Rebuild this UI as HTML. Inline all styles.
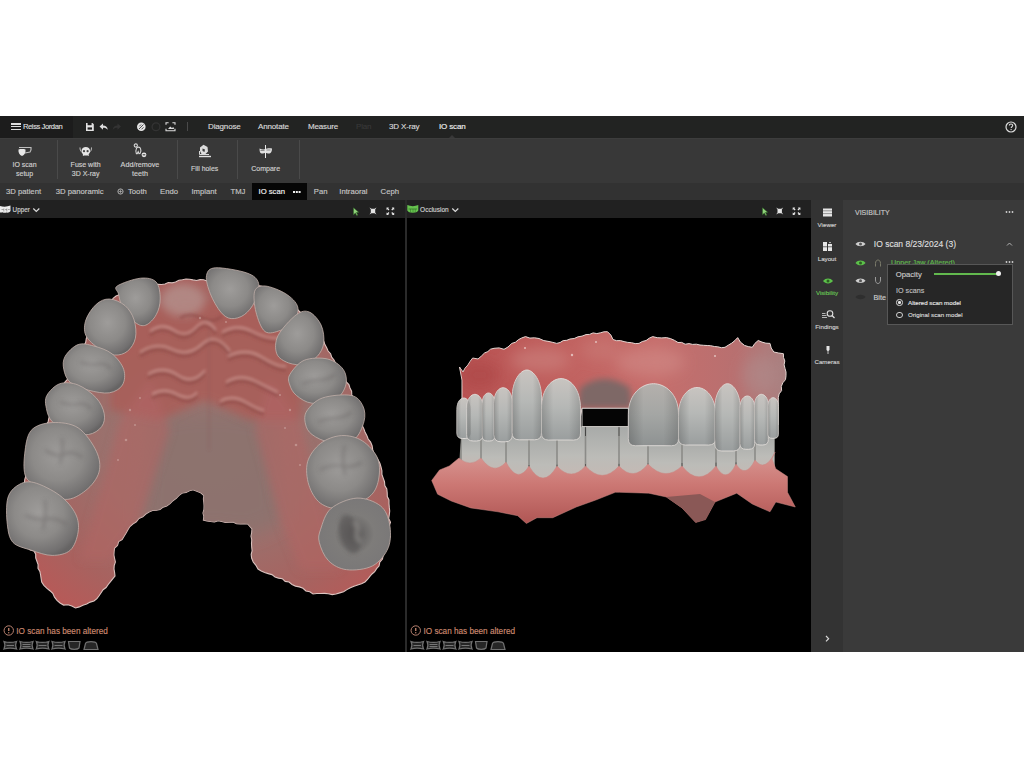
<!DOCTYPE html>
<html><head><meta charset="utf-8">
<style>
*{box-sizing:border-box;margin:0;padding:0}
html,body{width:1024px;height:768px;background:#fff;overflow:hidden}
body{position:relative;font-family:"Liberation Sans",sans-serif;color:#d0d0d0}
.a{position:absolute}
.t{position:absolute;white-space:nowrap;line-height:1;-webkit-text-stroke:0.15px currentColor}
#app{position:absolute;left:0;top:116px;width:1024px;height:536px;background:#000;overflow:hidden}
#topbar{left:0;top:0;width:1024px;height:22px;background:#222322}
#namebox{left:0;top:0;width:73px;height:22px;background:#1c1c1c}
#ribbon{left:0;top:22px;width:1024px;height:44.5px;background:#383838;border-top:1px solid #3d3d3d}
#tabs{left:0;top:66.5px;width:1024px;height:17.5px;background:#323232}
.menu{font-size:8px;letter-spacing:-0.15px;color:#d8d8d8;top:7.1px}
.rb{color:#cfcfcf;text-align:center;line-height:8.7px}
.sep{background:#4a4a4a;width:1px}
.tab{font-size:7.7px;color:#c4c4c4;top:72px}
#vh1{left:0;top:84px;width:405px;height:17.5px;background:#212121}
#vh2{left:407px;top:84px;width:404px;height:17.5px;background:#212121}
#div{left:405px;top:84px;width:2px;height:452px;background:#2a2a2a}
#strip{left:811px;top:84px;width:32px;height:452px;background:#333333}
#panel{left:843px;top:84px;width:181px;height:452px;background:#3a3a3a}
.sl{font-size:6.2px;color:#cfcfcf;text-align:center;width:32px}
.warn{font-size:8.2px;color:#cd8a70}
</style></head><body>
<div id="app">
  <div class="a" id="topbar"></div>
  <div class="a" id="namebox"></div>
  <!-- hamburger -->
  <div class="a" style="left:10.5px;top:7.2px;width:10px;height:1.4px;background:#ddd"></div>
  <div class="a" style="left:10.5px;top:9.9px;width:10px;height:1.4px;background:#ddd"></div>
  <div class="a" style="left:10.5px;top:12.6px;width:10px;height:1.4px;background:#ddd"></div>
  <div class="t" style="left:23px;top:7.4px;font-size:7.6px;letter-spacing:-0.42px;color:#dcdcdc">Reiss Jordan</div>

  <div class="t menu" style="left:208px">Diagnose</div>
  <div class="t menu" style="left:258px">Annotate</div>
  <div class="t menu" style="left:308px">Measure</div>
  <div class="t menu" style="left:356px;color:#383838">Plan</div>
  <div class="t menu" style="left:389px">3D X-ray</div>
  <div class="t menu" style="left:439px;color:#f0f0f0">IO scan</div>
  <div class="a sep" style="left:186.5px;top:6px;height:9px;background:#4a4a4a"></div>


  <!-- top icons -->
  <svg class="a" style="left:84px;top:4px" width="100" height="13" viewBox="0 0 100 13">
    <path d="M2 3h6.5l1.3 1.3v6.7H2z" fill="#e2e2e2"/>
    <rect x="3.6" y="3" width="4" height="2.2" fill="#202020"/>
    <rect x="3.6" y="7.4" width="4.4" height="2.2" fill="#202020"/>
    <path d="M15.5 6.5l3.5-3v2c2.6 0 4.4 1.3 4.8 4.3-1.1-1.5-2.6-2.1-4.8-2.1v2z" fill="#dedede"/>
    <path d="M37 6.5l-3.5-3v2c-2.6 0-4.4 1.3-4.8 4.3 1.1-1.5 2.6-2.1 4.8-2.1v2z" fill="#333"/>
    <circle cx="57.3" cy="6.8" r="4.3" fill="#e4e4e4"/>
    <path d="M55 9l4.5-4.5M55.3 6.3l1.8-1.8M57.5 9.3l2-2" stroke="#2a2a2a" stroke-width="0.8"/>
    <circle cx="72" cy="6.8" r="3.9" fill="none" stroke="#333" stroke-width="1.3"/>
    <path d="M82 4.8V2.8h2.6M88.4 2.8H91v2M82 8.8v2h9v-2" fill="none" stroke="#dcdcdc" stroke-width="1.1"/>
    <path d="M84 9l2.2-2.6 1.8 1.6 1.3-1.1.9 2.1z" fill="#dcdcdc"/>
  </svg>
  <!-- help -->
  <svg class="a" style="left:1004px;top:4px" width="14" height="14" viewBox="0 0 14 14">
    <circle cx="7" cy="7" r="5" fill="none" stroke="#dcdcdc" stroke-width="1.2"/>
    <path d="M5.3 5.6c0-1 .8-1.6 1.7-1.6s1.7.6 1.7 1.5c0 1.2-1.5 1.3-1.5 2.5" fill="none" stroke="#dcdcdc" stroke-width="1.1"/>
    <circle cx="7.1" cy="9.6" r=".7" fill="#dcdcdc"/>
  </svg>
  <div class="a" id="ribbon"></div>
  <div class="a" id="tabs"></div>

  <!-- ribbon content -->
  <div class="a sep" style="left:57px;top:23.5px;height:39.5px"></div>
  <div class="a sep" style="left:177px;top:23.5px;height:39.5px"></div>
  <div class="a sep" style="left:237px;top:23.5px;height:39.5px"></div>
  <div class="a sep" style="left:299px;top:23.5px;height:39.5px"></div>
  <div class="t rb" style="left:4.6px;width:40px;top:45.2px;font-size:7px">IO scan<br>setup</div>
  <div class="t rb" style="left:55.6px;width:60px;top:45.2px;font-size:7px">Fuse with<br>3D X-ray</div>
  <div class="t rb" style="left:110px;width:60px;top:45.2px;font-size:7.2px">Add/remove<br>teeth</div>
  <div class="t rb" style="left:174.6px;width:60px;top:49.4px;font-size:6.9px">Fill holes</div>
  <div class="t rb" style="left:235.7px;width:60px;top:49.4px;font-size:7px">Compare</div>
  <svg class="a" style="left:0;top:22px" width="300" height="26" viewBox="0 0 300 26">
    <!-- IO scan setup: tooth shield + window -->
    <path d="M19 9.5h12c0 0 .5 3-1 4.5l-5 1" fill="none" stroke="#bdbdbd" stroke-width="1.2"/>
    <path d="M18.5 11.5c2-.6 5-.6 7 0 .3 3-.8 5.5-3.5 6.5-2.7-1-3.8-3.5-3.5-6.5z" fill="#e8e8e8"/>
    <!-- skull -->
    <path d="M80 9.5c0 2 .5 3 1 4M91.5 9.5c0 2-.5 3-1 4" stroke="#cfcfcf" stroke-width="1" fill="none"/>
    <path d="M81.5 13c0-2.5 2-4 4.3-4s4.3 1.5 4.3 4c0 1.8-.8 2.6-1.4 3v2h-5.8v-2c-.6-.4-1.4-1.2-1.4-3z" fill="#e6e6e6"/>
    <circle cx="84" cy="13.2" r="1.1" fill="#444"/><circle cx="87.6" cy="13.2" r="1.1" fill="#444"/>
    <path d="M83.5 17.5h4.6" stroke="#555" stroke-width=".6"/>
    <!-- add/remove teeth -->
    <circle cx="135.8" cy="7.5" r="1.6" fill="none" stroke="#d8d8d8" stroke-width="1.1"/>
    <path d="M137 9.5c1.5-.6 3-.2 3.5 1 .8 1.6.3 3.5-.5 5l-1 .2-.8-2-1 2h-.8c-.6-1.6-.8-3.3-.2-4.5z" fill="none" stroke="#d8d8d8" stroke-width="1.1"/>
    <circle cx="144" cy="16.8" r="2.4" fill="#e6e6e6"/><path d="M142.7 16.8h2.6" stroke="#333" stroke-width="1"/>
    <!-- fill holes -->
    <path d="M200 9.5l3.5-2.8 4 2.2.5 4.5-2.5 2.5h-4l-1.5-3z" fill="#dcdcdc"/>
    <path d="M202.5 10.5l2.5 1-.5 2.5-2-1z" fill="#3a3a3a"/>
    <path d="M199.5 13v3.5h9.5" fill="none" stroke="#d8d8d8" stroke-width="1"/>
    <path d="M199 18.5h12" stroke="#e0e0e0" stroke-width="1.4"/>
    <!-- compare -->
    <path d="M259.5 10.5c2.5 1.2 5 1 6 .5s4-1 6.5-.5c0 3-1 4.5-2.5 5-1.5.4-2.5-.5-4-.5s-2.5.9-4 .5c-1.5-.5-2-2-2-5z" fill="#e0e0e0"/>
    <path d="M265.5 7v13" stroke="#e8e8e8" stroke-width="1"/>
    <path d="M260.5 12.5h4M266.5 12h4" stroke="#555" stroke-width=".6"/>
  </svg>
  <!-- notch -->
  <div class="a" style="left:449px;top:19px;width:0;height:0;border-left:3px solid transparent;border-right:3px solid transparent;border-bottom:3px solid #383838"></div>

  <!-- tabs -->
  <div class="a" style="left:252px;top:66.5px;width:55px;height:17.5px;background:#060606"></div>
  <div class="t tab" style="left:6px">3D patient</div>
  <div class="t tab" style="left:55.8px">3D panoramic</div>
  <svg class="a" style="left:116.5px;top:72px" width="7" height="7" viewBox="0 0 7 7"><circle cx="3.5" cy="3.5" r="2.6" fill="none" stroke="#bdbdbd" stroke-width=".9"/><path d="M1.5 3.5h4M3.5 1.5v4" stroke="#bdbdbd" stroke-width=".6"/></svg>
  <div class="t tab" style="left:128px">Tooth</div>
  <div class="t tab" style="left:160px">Endo</div>
  <div class="t tab" style="left:191.4px">Implant</div>
  <div class="t tab" style="left:230.5px">TMJ</div>
  <div class="t tab" style="left:258.5px;color:#f2f2f2">IO scan</div>
  <div class="a" style="left:293px;top:75px;width:1.6px;height:1.6px;background:#eee;box-shadow:2.8px 0 0 #eee,5.6px 0 0 #eee"></div>
  <div class="t tab" style="left:313.8px">Pan</div>
  <div class="t tab" style="left:339.3px">Intraoral</div>
  <div class="t tab" style="left:380.6px">Ceph</div>
  <div class="a" id="vh1"></div>
  <div class="a" id="vh2"></div>
  <div class="a" id="div"></div>
  <div class="a" id="strip"></div>
  <div class="a" id="panel"></div>

  <!-- viewport headers -->
  <svg class="a" style="left:0;top:84px" width="405" height="17" viewBox="0 0 405 17">
    <path d="M-1 5.5c3 1.5 8 1.5 11.5 0v5.5c-1 1.5-2.5 2-4 1.6-1.5.4-3 .3-4-.3-1.5.5-3 .3-3.5-.3z" fill="#ececec"/>
    <path d="M1.5 9.5h2.2M5 9.6h2M8 9.5h1.8M3.8 8.5v3M6.8 8.5v3" stroke="#777" stroke-width=".6"/>
    <path d="M33.3 8.5l3 3 3-3" fill="none" stroke="#dcdcdc" stroke-width="1.2"/>
    <!-- cursor -->
    <path d="M353.5 7.8l5.2 4.5-2.4.3 1.5 2.4-1 .6-1.5-2.5-1.8 1.6z" fill="#8fd27a" stroke="#2f6a24" stroke-width=".5"/>
    <!-- fit -->
    <path d="M369.5 7.5l2 1.3h3l2-1.3-1.3 2v3l1.3 2-2-1.3h-3l-2 1.3 1.3-2v-3z" fill="#e4e4e4"/>
    <!-- fullscreen -->
    <path d="M386.5 7.5h2.5l-.8.8 1.2 1.2-.9.9-1.2-1.2-.8.8zM394.2 7.5h-2.5l.8.8-1.2 1.2.9.9 1.2-1.2.8.8zM386.5 15h2.5l-.8-.8 1.2-1.2-.9-.9-1.2 1.2-.8-.8zM394.2 15h-2.5l.8-.8-1.2-1.2.9-.9 1.2 1.2.8-.8z" fill="#e4e4e4"/>
  </svg>
  <div class="t" style="left:12.6px;top:91.3px;font-size:6.3px;color:#d0d0d0">Upper</div>
  <svg class="a" style="left:407px;top:84px" width="404" height="17" viewBox="0 0 404 17">
    <path d="M0.3 5c3.5 1.5 7.5 1.5 11 0v5.5c-1 1.5-2.5 2.2-5.5 2.2s-4.5-.7-5.5-2.2z" fill="#66c24f"/>
    <path d="M1.5 9h8.5" stroke="#2e6e22" stroke-width=".7"/>
    <path d="M3.5 9v3M6 9v3.3M8.3 9v3" stroke="#2e6e22" stroke-width=".5"/>
    <path d="M45.3 8.5l3 3 3-3" fill="none" stroke="#dcdcdc" stroke-width="1.2"/>
    <path d="M353.5 7.8l5.2 4.5-2.4.3 1.5 2.4-1 .6-1.5-2.5-1.8 1.6z" fill="#8fd27a" stroke="#2f6a24" stroke-width=".5" transform="translate(2 0)"/>
    <path d="M369.5 7.5l2 1.3h3l2-1.3-1.3 2v3l1.3 2-2-1.3h-3l-2 1.3 1.3-2v-3z" fill="#e4e4e4" transform="translate(-0.3 0)"/>
    <path d="M386.5 7.5h2.5l-.8.8 1.2 1.2-.9.9-1.2-1.2-.8.8zM394.2 7.5h-2.5l.8.8-1.2 1.2.9.9 1.2-1.2.8.8zM386.5 15h2.5l-.8-.8 1.2-1.2-.9-.9-1.2 1.2-.8-.8zM394.2 15h-2.5l.8-.8-1.2-1.2.9-.9 1.2 1.2.8-.8z" fill="#e4e4e4" transform="translate(-0.8 0)"/>
  </svg>
  <div class="t" style="left:420.1px;top:90.9px;font-size:6.5px;color:#d0d0d0">Occlusion</div>
  <div class="a" id="jaws"><svg class="a" style="left:0;top:101px" width="405" height="435" viewBox="0 217 405 435">
<defs>
  <radialGradient id="palate" cx="0.52" cy="0.5" r="0.62">
    <stop offset="0" stop-color="#9c7672"/>
    <stop offset="0.45" stop-color="#9a716d"/>
    <stop offset="0.8" stop-color="#a8625f"/>
    <stop offset="1" stop-color="#b65a58"/>
  </radialGradient>
  <radialGradient id="tooth" cx="0.45" cy="0.42" r="0.62">
    <stop offset="0" stop-color="#9e9c9a"/>
    <stop offset="0.55" stop-color="#8c8a88"/>
    <stop offset="0.9" stop-color="#727070"/>
    <stop offset="1" stop-color="#666464"/>
  </radialGradient>
  <radialGradient id="toothD" cx="0.5" cy="0.5" r="0.6">
    <stop offset="0" stop-color="#5a5858"/>
    <stop offset="0.45" stop-color="#7e7c7a"/>
    <stop offset="0.85" stop-color="#7a7878"/>
    <stop offset="1" stop-color="#626060"/>
  </radialGradient>
  <filter id="soft2" x="-20%" y="-20%" width="140%" height="140%"><feGaussianBlur stdDeviation="4"/></filter>
<filter id="soft8" x="-30%" y="-30%" width="160%" height="160%"><feGaussianBlur stdDeviation="9"/></filter>
  <filter id="soft1" x="-20%" y="-20%" width="140%" height="140%"><feGaussianBlur stdDeviation="1.5"/></filter>
<filter id="soft2b" x="-20%" y="-20%" width="140%" height="140%"><feGaussianBlur stdDeviation="2.2"/></filter>
  </defs>
<path id="gum1" d="M165.0 284.0L168.3 282.5L172.1 282.9L175.6 282.0L178.9 280.2L182.5 279.8L186.0 279.0L189.5 279.2L193.0 279.9L196.5 280.5L200.1 279.6L203.6 279.8L207.0 281.0L210.6 281.7L214.2 281.0L217.7 281.7L221.4 280.4L224.9 281.3L228.5 281.9L232.1 281.1L235.6 282.5L239.2 282.5L242.9 281.0L246.4 281.1L250.0 282.0L253.5 283.5L256.8 285.6L260.8 286.1L264.5 287.2L267.9 289.0L271.7 289.8L275.0 292.0L278.1 293.8L280.6 296.4L283.3 298.7L286.4 300.5L289.2 302.7L292.0 304.9L294.5 307.5L297.5 309.5L300.0 312.0L303.1 314.3L304.5 318.1L307.4 320.7L309.8 323.7L312.9 326.0L314.3 329.8L317.0 332.6L320.0 335.0L322.3 337.8L323.8 341.1L324.9 344.6L326.7 347.7L328.1 351.0L330.6 353.7L331.7 357.2L334.0 360.0L335.5 363.3L337.9 366.0L339.2 369.4L340.5 372.8L342.3 375.9L344.7 378.7L346.3 381.9L348.9 384.5L350.0 388.0L351.6 391.2L351.8 394.9L353.6 398.1L355.2 401.3L355.7 405.0L356.6 408.4L357.8 411.8L359.4 415.0L360.5 418.4L361.5 421.9L362.2 425.4L363.8 428.6L365.0 432.0L366.8 435.4L368.2 439.0L370.6 442.1L372.1 445.7L372.7 449.7L373.8 453.4L376.0 456.6L378.0 459.9L379.9 463.3L381.0 467.0L381.9 470.7L381.9 474.5L383.2 478.1L384.5 481.7L384.8 485.5L386.8 488.9L387.2 492.7L387.3 496.5L389.0 500.0L389.0 503.7L389.3 507.4L389.7 511.1L389.3 514.8L388.7 518.5L390.5 522.2L389.2 525.9L389.2 529.6L389.2 533.3L390.0 537.0L388.2 540.5L386.7 544.1L385.8 547.9L384.4 551.5L383.2 555.2L382.5 559.0L379.8 562.1L379.0 566.0L376.6 568.6L374.7 571.7L372.0 574.0L369.7 576.7L367.5 579.5L365.0 582.0L361.5 583.8L357.7 584.9L354.0 586.3L350.4 587.8L346.9 589.6L343.6 591.8L339.8 592.9L336.0 594.0L332.2 594.6L328.3 593.8L324.5 593.4L320.7 593.5L316.8 593.5L313.0 594.0L309.8 591.8L305.9 591.0L303.0 588.3L299.4 586.9L295.5 586.1L292.0 584.5L289.0 582.0L285.2 581.4L282.3 578.7L278.5 578.1L275.0 576.9L271.9 574.6L268.2 573.6L264.6 572.6L261.2 571.0L258.0 569.0L255.9 565.3L253.2 562.0L251.6 558.0L251.2 554.4L252.1 550.8L251.7 547.1L251.5 543.5L251.8 539.9L251.0 536.2L251.7 532.6L252.0 529.0L247.7 524.0L244.0 523.8L240.3 523.9L236.6 523.7L233.0 521.9L229.2 522.3L225.5 522.5L221.9 521.5L218.2 520.8L214.4 521.9L210.7 521.5L207.0 521.0L203.4 520.0L203.9 516.5L203.0 513.0L204.0 509.5L204.1 506.0L203.9 502.5L203.4 499.0L204.0 495.5L200.7 492.8L196.9 491.2L193.0 489.8L189.4 490.8L186.0 492.4L182.3 493.0L179.0 495.4L176.2 498.3L172.9 500.7L170.0 503.6L166.7 506.0L163.1 507.1L160.0 509.4L156.4 510.3L152.5 510.5L149.0 512.0L145.8 514.0L142.8 516.8L138.9 518.5L136.3 521.8L132.8 524.0L129.9 526.5L127.9 529.7L126.1 533.1L124.1 536.3L122.1 539.5L118.6 541.6L117.5 545.5L114.6 548.0L114.1 551.5L113.9 555.0L114.6 558.5L115.4 562.0L114.2 565.5L114.0 569.0L114.6 572.5L115.0 576.0L112.7 578.8L110.5 581.7L108.2 584.5L106.1 587.5L103.1 589.7L101.1 592.7L99.1 595.8L96.9 598.7L94.0 601.0L90.2 602.1L86.7 604.1L82.9 605.2L79.3 606.9L75.5 608.0L71.8 606.1L68.0 604.8L63.6 605.1L60.0 603.0L57.0 600.4L54.5 597.2L52.8 593.4L49.9 590.7L46.7 588.2L43.9 585.3L41.7 582.0L41.1 578.5L40.6 575.0L39.9 571.5L38.0 568.3L38.1 564.6L36.9 561.3L35.7 557.9L35.7 554.2L34.0 551.0L30.3 549.9L27.2 547.6L23.2 547.2L20.0 545.0L18.6 541.6L19.0 537.7L16.9 534.4L17.0 530.6L15.9 527.1L15.5 523.4L14.0 520.0L14.8 516.2L15.7 512.4L16.6 508.7L18.6 505.2L19.2 501.3L20.8 497.7L21.7 493.9L22.0 490.0L22.5 486.3L24.4 483.0L24.8 479.3L25.9 475.7L27.1 472.3L29.6 469.2L30.7 465.7L31.9 462.2L32.2 458.4L33.9 455.1L35.3 451.7L36.0 448.0L37.2 444.6L39.0 441.5L39.8 437.9L41.0 434.6L42.8 431.4L45.2 428.6L46.1 425.0L48.1 422.0L48.8 418.4L49.9 415.0L52.2 412.1L53.7 408.8L53.8 404.9L56.0 402.0L57.9 398.8L58.5 395.0L60.1 391.7L63.0 389.0L63.2 385.0L65.1 381.8L67.9 379.0L68.5 375.3L69.6 371.7L71.3 368.4L73.0 365.1L75.0 362.0L77.1 358.9L77.7 355.0L80.7 352.3L81.5 348.6L84.1 345.7L85.7 342.3L86.3 338.5L87.9 335.1L90.0 332.0L91.0 328.3L93.6 325.5L95.0 322.0L96.7 318.6L99.0 315.7L102.7 313.9L104.0 310.2L106.8 307.7L108.9 304.6L111.1 301.6L113.1 298.4L116.0 296.0L119.9 294.6L123.4 292.7L126.9 290.7L130.0 288.0L133.4 286.9L136.9 286.7L140.5 287.0L144.1 287.3L147.5 286.1L151.0 285.9L154.5 285.5L158.0 284.4L161.5 284.5Z" fill="url(#palate)" stroke="#dcc4c0" stroke-width="1.1"/>
<clipPath id="gc1"><use href="#gum1"/></clipPath>
<g clip-path="url(#gc1)">
 <g filter="url(#soft8)">
  <path d="M150 420Q210 400 275 420L282 520L250 535L210 530L168 535L140 520Z" fill="#8c726e" opacity="0.9"/>
 </g>
 <g filter="url(#soft2)">
  <path d="M140 310Q200 290 270 310L305 370L300 420L250 420L205 400L160 420L110 410L110 350Z" fill="#a85e5a" opacity="0.9"/>
  <ellipse cx="183" cy="300" rx="22" ry="16" fill="#b4908c" opacity="0.8"/>
  <path d="M120 420L150 380L170 430L140 520L110 560L80 560Z" fill="#b06664" opacity="0.6"/>
  <path d="M300 420L270 380L255 430L280 520L300 570L340 570Z" fill="#b06664" opacity="0.6"/>
 </g>
 <g filter="url(#soft1)" fill="none">
  <g stroke="#8c4846" stroke-width="3" opacity="0.6">
   <path d="M150 335q12 -9 24 -1t22 -3t20 3"/>
   <path d="M140 356q16 -11 32 -3t30 -5t28 7"/>
   <path d="M148 378q15 -9 30 1t27 -5"/>
   <path d="M152 398q12 -7 25 0t20 -2"/>
   <path d="M222 336q15 -9 30 -1t28 7"/>
   <path d="M228 360q18 -9 34 1t24 9"/>
   <path d="M226 386q14 -9 30 -1t22 11"/>
   <path d="M220 405q12 -7 26 1t18 8"/>
   <path d="M180 318q10 -6 22 0t20 -2"/>
  </g>
  <g stroke="#d8aaa4" stroke-width="1.8" opacity="0.65">
   <path d="M150 331q12 -9 24 -1t22 -3t20 3"/>
   <path d="M140 352q16 -11 32 -3t30 -5t28 7"/>
   <path d="M148 374q15 -9 30 1t27 -5"/>
   <path d="M152 394q12 -7 25 0t20 -2"/>
   <path d="M222 332q15 -9 30 -1t28 7"/>
   <path d="M228 356q18 -9 34 1t24 9"/>
   <path d="M226 382q14 -9 30 -1t22 11"/>
   <path d="M220 401q12 -7 26 1t18 8"/>
  </g>
  <path d="M209 330v120" stroke="#8a5a58" stroke-width="1.5" opacity="0.35"/>
 </g>
 <g fill="#d8b8b2" opacity="0.5">
  <circle cx="130" cy="410" r="1.2"/><circle cx="135" cy="425" r="1"/><circle cx="126" cy="440" r="1.3"/><circle cx="140" cy="398" r="1"/>
  <circle cx="290" cy="410" r="1.2"/><circle cx="285" cy="428" r="1"/><circle cx="296" cy="445" r="1.3"/><circle cx="280" cy="395" r="1"/>
  <circle cx="118" cy="460" r="1"/><circle cx="300" cy="465" r="1"/><circle cx="200" cy="318" r="1.2"/><circle cx="226" cy="322" r="1"/>
 </g>
</g>
<g stroke="#c2b0aa" stroke-width="0.8">
<path d="M117.2 286.0C120.9 283.4 134.1 278.8 140.6 278.2C147.1 277.6 153.0 278.6 156.2 282.1C159.5 285.6 160.2 293.6 160.2 299.0C160.2 304.4 158.7 310.3 156.2 314.7C153.8 319.1 149.3 323.8 145.8 325.1C142.3 326.4 139.3 325.5 135.4 322.5C131.5 319.5 125.2 311.7 122.4 306.9C119.6 302.1 119.4 297.4 118.5 293.9C117.6 290.4 113.5 288.6 117.2 286.0Z" fill="url(#tooth)"/>
<path d="M85.9 319.9C87.6 314.7 92.4 307.8 96.3 304.3C100.3 300.8 104.6 298.8 109.4 299.0C114.2 299.2 120.9 302.1 125.0 305.6C129.1 309.1 132.4 314.5 134.1 319.9C135.8 325.3 136.5 332.9 135.4 338.1C134.3 343.3 131.1 348.3 127.6 351.1C124.1 353.9 119.4 355.4 114.6 355.0C109.8 354.6 103.8 351.8 99.0 348.5C94.2 345.2 88.1 340.3 85.9 335.5C83.7 330.7 84.2 325.1 85.9 319.9Z" fill="url(#tooth)"/>
<path d="M65.1 356.4C67.5 352.3 73.3 346.3 78.1 344.6C82.9 342.9 88.1 344.5 93.8 346.0C99.4 347.5 107.0 349.9 112.0 353.8C117.0 357.6 122.0 364.2 123.7 369.4C125.4 374.6 124.8 381.1 122.4 385.0C120.0 388.9 115.1 391.9 109.4 392.8C103.8 393.7 95.0 391.9 88.5 390.2C82.0 388.5 74.4 385.9 70.3 382.4C66.2 378.9 64.7 373.7 63.8 369.4C62.9 365.1 62.7 360.5 65.1 356.4Z" fill="url(#tooth)"/>
<path d="M46.9 395.4C49.2 391.3 54.7 385.4 59.9 383.7C65.1 382.0 72.0 382.6 78.1 385.0C84.2 387.4 92.0 393.2 96.3 398.0C100.7 402.8 103.3 408.8 104.2 413.6C105.1 418.4 104.2 423.2 101.6 426.7C99.0 430.2 94.2 433.6 88.5 434.5C82.8 435.4 73.8 434.1 67.7 431.9C61.6 429.7 55.7 425.4 52.1 421.5C48.5 417.6 47.2 412.8 46.4 408.4C45.5 404.0 44.6 399.5 46.9 395.4Z" fill="url(#tooth)"/>
<path d="M24.7 453.9C25.6 446.1 26.7 435.6 31.2 430.4C35.8 425.2 44.3 423.0 52.1 422.6C59.9 422.2 70.7 423.0 78.1 427.8C85.5 432.6 92.9 443.9 96.3 451.2C99.8 458.6 100.7 465.6 99.0 472.1C97.3 478.6 91.6 485.8 85.9 490.3C80.2 494.9 72.5 499.8 65.1 499.4C57.7 499.0 48.2 491.4 41.7 487.7C35.2 484.0 28.8 482.9 26.0 477.3C23.2 471.7 23.8 461.7 24.7 453.9Z" fill="url(#tooth)"/>
<path d="M7.8 498.1C9.6 491.6 13.9 487.7 18.2 485.1C22.5 482.5 26.9 480.8 33.9 482.5C40.8 484.2 53.0 490.3 59.9 495.5C66.8 500.7 72.5 507.7 75.5 513.8C78.5 519.8 79.0 525.9 78.1 532.0C77.2 538.1 74.6 546.3 70.3 550.2C66.0 554.1 58.6 555.4 52.1 555.4C45.6 555.4 37.8 552.4 31.2 550.2C24.7 548.0 17.0 546.7 13.0 542.4C9.0 538.1 8.2 531.6 7.3 524.2C6.4 516.8 6.0 504.6 7.8 498.1Z" fill="url(#tooth)"/>
<path d="M206.5 275.6C207.4 271.2 208.9 268.2 215.6 267.8C222.3 267.4 239.7 270.4 246.9 273.0C254.1 275.6 257.3 278.6 258.6 283.4C259.9 288.2 257.1 296.5 254.7 301.7C252.3 306.9 248.2 311.9 244.3 314.7C240.4 317.5 235.2 319.0 231.2 318.6C227.3 318.2 224.3 316.2 220.8 312.1C217.3 308.0 212.8 300.0 210.4 293.9C208.0 287.8 205.6 280.0 206.5 275.6Z" fill="url(#tooth)"/>
<path d="M254.7 291.2C256.2 286.9 259.9 285.6 265.1 286.0C270.3 286.4 280.5 290.4 285.9 293.9C291.3 297.4 296.4 302.1 297.7 306.9C299.0 311.7 296.6 318.6 293.8 322.5C290.9 326.4 285.5 328.8 280.7 330.3C275.9 331.8 269.2 334.6 265.1 331.6C261.0 328.6 257.7 318.8 256.0 312.1C254.3 305.4 253.2 295.6 254.7 291.2Z" fill="url(#tooth)"/>
<path d="M278.1 335.5C281.4 329.0 291.1 318.6 296.4 314.7C301.6 310.8 305.3 310.4 309.4 312.1C313.5 313.8 318.7 319.9 321.1 325.1C323.5 330.3 324.4 338.1 323.7 343.3C323.0 348.5 320.4 352.9 317.2 356.4C313.9 359.8 309.0 363.1 304.2 364.2C299.4 365.3 293.1 364.6 288.5 362.9C283.9 361.2 278.5 358.3 276.8 353.8C275.1 349.2 274.8 342.0 278.1 335.5Z" fill="url(#tooth)"/>
<path d="M289.8 374.6C292.2 370.5 297.9 362.9 304.2 360.3C310.5 357.7 321.1 357.5 327.6 359.0C334.1 360.5 340.2 365.1 343.2 369.4C346.2 373.7 347.1 380.0 345.8 385.0C344.5 390.0 341.0 396.3 335.4 399.3C329.8 402.3 318.5 403.9 312.0 403.2C305.5 402.5 300.1 398.4 296.4 395.4C292.7 392.4 290.9 388.5 289.8 385.0C288.7 381.5 287.4 378.7 289.8 374.6Z" fill="url(#tooth)"/>
<path d="M306.8 411.0C309.6 406.7 315.0 400.6 322.4 398.0C329.8 395.4 344.3 394.1 351.0 395.4C357.7 396.7 360.6 401.4 362.8 405.8C365.0 410.2 365.5 415.9 364.0 421.5C362.5 427.1 359.2 436.2 353.6 439.7C348.0 443.2 337.1 443.2 330.2 442.3C323.3 441.4 316.1 437.6 312.0 434.5C307.9 431.4 306.4 427.9 305.5 424.0C304.6 420.1 304.0 415.3 306.8 411.0Z" fill="url(#tooth)"/>
<path d="M307.6 461.7C309.6 454.8 315.0 447.8 320.6 443.4C326.2 439.0 334.5 436.0 341.4 435.6C348.3 435.2 356.2 436.9 362.2 440.8C368.3 444.7 375.3 452.1 377.9 459.0C380.5 465.9 379.6 476.0 377.9 482.5C376.2 489.0 373.6 493.8 367.5 498.1C361.4 502.4 349.2 507.6 341.4 508.5C333.6 509.4 326.0 507.2 320.6 503.3C315.2 499.4 311.1 492.0 308.9 485.1C306.7 478.2 305.7 468.6 307.6 461.7Z" fill="url(#tooth)"/>
<path d="M320.6 529.3C322.6 523.6 324.9 513.7 331.0 508.5C337.1 503.3 348.8 498.5 357.0 498.1C365.2 497.7 375.1 501.6 380.5 505.9C385.9 510.2 388.3 517.1 389.6 524.1C390.9 531.1 391.1 540.7 388.3 547.6C385.5 554.5 379.6 562.1 372.7 565.8C365.8 569.5 354.0 570.6 346.6 569.7C339.2 568.8 332.9 565.2 328.4 560.6C323.8 556.0 320.6 547.6 319.3 542.4C318.0 537.2 318.7 534.9 320.6 529.3Z" fill="url(#toothD)"/>
</g>
<g filter="url(#soft2b)" fill="none" stroke="#5e5a5a" stroke-width="2.2" opacity="0.5">
  <path d="M80 362q10 4 18 2t14 6"/>
  <path d="M60 402q10 4 18 2t14 6"/>
  <path d="M302 384q10 -4 18 -4t16 -6"/>
  <path d="M318 422q10 -4 18 -4t16 -6"/>
  <path d="M45 450q12 8 20 4t18 4M62 438q2 12 -2 26"/>
  <path d="M25 515q12 6 22 4t20 6M45 500q2 12 -2 30"/>
  <path d="M320 470q10 -6 22 -4t20 -4M345 445q-4 12 0 30"/>
 </g>
 <g filter="url(#soft2b)">
  <ellipse cx="350" cy="534" rx="10" ry="20" fill="#555353" opacity="0.6" transform="rotate(-15 350 534)"/>
  <path d="M354 522q5 4 3 10t4 10" stroke="#aaa6a2" stroke-width="4" fill="none" opacity="0.5"/>
 </g>
</svg><svg class="a" style="left:407px;top:101px" width="404" height="435" viewBox="407 217 404 435">
<defs>
<linearGradient id="ugum" x1="0" y1="0" x2="1" y2="0">
  <stop offset="0" stop-color="#b85252"/>
  <stop offset="0.3" stop-color="#c0605e"/>
  <stop offset="0.6" stop-color="#c66e6c"/>
  <stop offset="0.85" stop-color="#b87070"/>
  <stop offset="1" stop-color="#a88080"/>
</linearGradient>
<linearGradient id="lgum" x1="0" y1="0" x2="0" y2="1">
  <stop offset="0" stop-color="#d89894"/>
  <stop offset="0.45" stop-color="#cc7874"/>
  <stop offset="1" stop-color="#b05654"/>
</linearGradient>
<linearGradient id="utd" x1="0" y1="0" x2="0" y2="1">
  <stop offset="0" stop-color="#b4b0ac"/>
  <stop offset="0.5" stop-color="#a4a6a4"/>
  <stop offset="1" stop-color="#8e9292"/>
</linearGradient>
<linearGradient id="ut" x1="0" y1="0" x2="0" y2="1">
  <stop offset="0" stop-color="#c8c4c0"/>
  <stop offset="0.45" stop-color="#b6b8b6"/>
  <stop offset="1" stop-color="#9a9e9e"/>
</linearGradient>
<linearGradient id="uts" x1="0" y1="0" x2="1" y2="0">
  <stop offset="0" stop-color="#000" stop-opacity="0.18"/>
  <stop offset="0.3" stop-color="#000" stop-opacity="0"/>
  <stop offset="0.7" stop-color="#000" stop-opacity="0"/>
  <stop offset="1" stop-color="#000" stop-opacity="0.15"/>
</linearGradient>
<linearGradient id="lt" x1="0" y1="0" x2="0" y2="1">
  <stop offset="0" stop-color="#a8aaa8"/>
  <stop offset="0.5" stop-color="#bcbcb8"/>
  <stop offset="1" stop-color="#c8b8b2"/>
</linearGradient>
<filter id="soft3" x="-30%" y="-30%" width="160%" height="160%"><feGaussianBlur stdDeviation="3"/></filter>
<filter id="soft8b" x="-50%" y="-50%" width="200%" height="200%"><feGaussianBlur stdDeviation="7"/></filter>
</defs>
<path d="M461 436H774L772 462L459 466Z" fill="#8e8e8a"/>
<g fill="url(#lt)" stroke="#8a8a86" stroke-width="0.6">
<path d="M461.5 436.0L480.5 436.0L480.5 462.4C480.5 469.1 475.8 471.0 471.0 471.0C466.2 471.0 461.5 469.1 461.5 462.4Z"/>
<path d="M481.5 436.0L505.5 436.0L505.5 468.2C505.5 476.6 499.5 479.0 493.5 479.0C487.5 479.0 481.5 476.6 481.5 468.2Z"/>
<path d="M506.5 436.0L528.5 436.0L528.5 477.7C528.5 485.4 523.0 487.6 517.5 487.6C512.0 487.6 506.5 485.4 506.5 477.7Z"/>
<path d="M529.5 436.0L556.5 436.0L556.5 480.9C556.5 490.3 549.8 493.0 543.0 493.0C536.2 493.0 529.5 490.3 529.5 480.9Z"/>
<path d="M557.5 426.6L585.0 426.6L585.0 472.6C585.0 482.2 578.1 485.0 571.2 485.0C564.4 485.0 557.5 482.2 557.5 472.6Z"/>
<path d="M586.0 426.6L618.5 426.6L618.5 473.0C618.5 484.4 610.4 487.6 602.2 487.6C594.1 487.6 586.0 484.4 586.0 473.0Z"/>
<path d="M619.5 426.6L647.5 426.6L647.5 472.4C647.5 482.2 640.5 485.0 633.5 485.0C626.5 485.0 619.5 482.2 619.5 472.4Z"/>
<path d="M648.5 440.0L681.5 440.0L681.5 470.1C681.5 481.7 673.2 485.0 665.0 485.0C656.8 485.0 648.5 481.7 648.5 470.1Z"/>
<path d="M682.5 440.0L715.5 440.0L715.5 475.6C715.5 487.2 707.2 490.5 699.0 490.5C690.8 490.5 682.5 487.2 682.5 475.6Z"/>
<path d="M716.5 440.0L735.5 440.0L735.5 479.1C735.5 485.7 730.8 487.6 726.0 487.6C721.2 487.6 716.5 485.7 716.5 479.1Z"/>
<path d="M736.5 438.0L754.5 438.0L754.5 473.9C754.5 480.2 750.0 482.0 745.5 482.0C741.0 482.0 736.5 480.2 736.5 473.9Z"/>
<path d="M755.5 436.0L774.5 436.0L774.5 467.4C774.5 474.1 769.8 476.0 765.0 476.0C760.2 476.0 755.5 474.1 755.5 467.4Z"/>
</g>
<path d="M431.7 480.5L439.5 470L449.3 466L459 458Q470.0 468.0 481.0 458.0Q493.5 476.0 506.0 462.0Q517.5 484.6 529.0 466.0Q543.0 490.0 557.0 466.0Q571.2 482.0 585.5 466.0Q602.2 484.6 619.0 466.0Q633.5 482.0 648.0 464.0Q665.0 482.0 682.0 466.0Q699.0 487.5 716.0 466.0Q726.0 484.6 736.0 464.0Q745.5 479.0 755.0 460.0Q765.0 473.0 775.0 452.0L772 459L775.8 468.8L787.5 476.6L787.5 492.3L795.3 507L775.8 502L770 511.8L752.3 504L736.7 493.2L715 502L705.5 519.6L695.7 522.5L682 507.9L666.4 497L648.8 493.2L619.5 492.3L615.3 492.3L595.8 500L576.25 507L552.8 517.7L537 517.7L526.4 523.5L517.7 515.7L498 511.8L470.8 507.9L451.25 501L437.6 494.2Z" fill="url(#lgum)" stroke="#c88884" stroke-width="0.5"/>
<path d="M666 497L682 508L695.7 522.5L705.5 519.6L715 502L700 494Z" fill="#8a5856"/>
<path id="ug2" d="M459.5 367.0L463.0 372.0L465.0 368.2L467.9 365.0L470.1 361.4L472.7 358.0L478.0 359.0L481.4 356.1L484.5 353.0L487.8 351.6L490.5 349.2L494.0 348.3L499.1 347.9L504.0 349.3L508.0 347.0L511.8 343.4L515.5 342.2L518.5 339.6L521.9 337.9L525.5 336.6L529.9 338.1L534.5 337.8L539.0 338.5L543.8 340.6L549.0 341.5L552.9 342.4L556.7 343.4L560.1 342.5L563.2 340.6L566.8 340.3L570.0 339.0L574.2 338.5L578.0 336.8L582.1 336.1L586.0 334.6L589.6 334.4L593.1 332.9L596.8 333.6L600.4 332.8L603.9 331.8L607.5 331.7L610.9 335.1L613.0 339.5L616.6 340.7L620.4 340.6L624.1 341.6L627.8 342.4L631.5 342.7L635.2 343.6L639.0 343.4L642.3 341.5L646.1 340.5L649.2 338.2L652.7 336.6L657.2 337.7L661.8 337.9L666.4 337.6L670.5 338.6L674.4 340.3L678.0 342.5L681.7 342.4L685.2 344.2L689.0 343.6L692.6 344.4L696.4 344.2L700.0 345.0L703.6 345.3L707.2 345.5L710.7 345.7L714.3 346.5L717.8 346.8L721.4 347.7L725.0 347.3L728.4 345.1L731.8 343.1L734.9 340.5L737.7 337.6L740.4 342.1L744.5 345.4L748.3 346.6L752.3 347.3L754.8 343.5L758.2 340.5L762.0 342.1L765.9 343.2L770.0 343.4L771.2 348.0L773.8 352.0L778.6 353.0L783.4 353.7L783.5 357.4L784.8 361.0L784.1 364.8L785.0 368.4L786.0 372.0L786.0 375.7L785.5 379.6L782.8 382.8L781.3 386.4L781.6 390.6L779.1 393.9L778.3 397.7L778.0 425.0L740.0 430.0L700.0 430.0L640.0 430.0L628.4 408.3L582.0 408.3L578.0 430.0L520.0 430.0L470.0 430.0L462.0 425.0L462.0 380.0Z" fill="url(#ugum)" stroke="#e6d8d4" stroke-width="1"/>
<clipPath id="ugc"><use href="#ug2"/></clipPath>
<g clip-path="url(#ugc)"><g filter="url(#soft8b)">
 <ellipse cx="540" cy="360" rx="30" ry="12" fill="#d08c88" opacity="0.5"/>
 <ellipse cx="650" cy="362" rx="35" ry="14" fill="#d49490" opacity="0.45"/>
 <ellipse cx="600" cy="350" rx="20" ry="10" fill="#cc8480" opacity="0.4"/>
 <ellipse cx="480" cy="375" rx="20" ry="14" fill="#a84444" opacity="0.5"/>
 <ellipse cx="760" cy="375" rx="18" ry="20" fill="#b09090" opacity="0.5"/>
</g></g>
<g filter="url(#soft3)"><path d="M578 408L580 388Q604 370 630 388L632 408Z" fill="#7e6866"/></g>
<g fill="#f0e0dc" opacity="0.7"><circle cx="572" cy="355" r="1.2"/><circle cx="596" cy="342" r="1"/><circle cx="715" cy="356" r="1"/><circle cx="525" cy="348" r="1"/></g>
<path d="M582 408.3H628.4V426.6H582Z" fill="#050505" stroke="#e4e0dc" stroke-width="0.9"/>
<g stroke="#e2deda" stroke-width="0.9">
<path d="M456.9 433.0L456.9 409.6C456.9 401.5 460.7 398.0 463.8 398.0C466.8 398.0 470.6 401.5 470.6 409.6L470.6 433.0Q470.6 438.5 465.1 438.5L462.4 438.5Q456.9 438.5 456.9 433.0Z" fill="url(#ut)"/>
<path d="M466.7 434.5L466.7 408.2C466.7 398.5 471.3 394.3 474.9 394.3C478.4 394.3 483.0 398.5 483.0 408.2L483.0 434.5Q483.0 441.0 476.5 441.0L473.2 441.0Q466.7 441.0 466.7 434.5Z" fill="url(#ut)"/>
<path d="M482.3 436.0L482.3 403.5C482.3 396.2 485.8 393.0 488.5 393.0C491.2 393.0 494.7 396.2 494.7 403.5L494.7 436.0Q494.7 441.0 489.7 441.0L487.3 441.0Q482.3 441.0 482.3 436.0Z" fill="url(#ut)"/>
<path d="M494.0 434.8L494.0 403.2C494.0 392.3 499.1 387.7 503.1 387.7C507.1 387.7 512.2 392.3 512.2 403.2L512.2 434.8Q512.2 441.8 505.2 441.8L501.0 441.8Q494.0 441.8 494.0 434.8Z" fill="url(#ut)"/>
<path d="M512.2 432.8L512.2 397.9C512.2 380.5 520.4 370.0 526.9 370.0C533.3 370.0 541.5 380.5 541.5 397.9L541.5 432.8Q541.5 439.8 534.5 439.8L519.2 439.8Q512.2 439.8 512.2 432.8Z" fill="url(#ut)"/>
<path d="M541.5 433.0L541.5 409.3C541.5 387.8 552.4 378.6 561.0 378.6C569.6 378.6 580.5 387.8 580.5 409.3L580.5 433.0Q580.5 440.0 573.5 440.0L548.5 440.0Q541.5 440.0 541.5 433.0Z" fill="url(#ut)"/>
<path d="M628.4 438.7L628.4 414.7C628.4 393.0 642.4 383.7 653.5 383.7C664.5 383.7 678.5 393.0 678.5 414.7L678.5 438.7Q678.5 445.7 671.5 445.7L635.4 445.7Q628.4 445.7 628.4 438.7Z" fill="url(#utd)"/>
<path d="M678.5 438.0L678.5 416.2C678.5 396.1 688.9 387.5 697.1 387.5C705.3 387.5 715.7 396.1 715.7 416.2L715.7 438.0Q715.7 445.0 708.7 445.0L685.5 445.0Q678.5 445.0 678.5 438.0Z" fill="url(#ut)"/>
<path d="M714.9 444.0L714.9 408.2C714.9 393.2 722.0 383.7 727.5 383.7C733.1 383.7 740.2 393.2 740.2 408.2L740.2 444.0Q740.2 451.0 733.2 451.0L721.9 451.0Q714.9 451.0 714.9 444.0Z" fill="url(#ut)"/>
<path d="M740.0 443.5L740.0 408.4C740.0 399.7 744.1 396.0 747.3 396.0C750.5 396.0 754.6 399.7 754.6 408.4L754.6 443.5Q754.6 449.3 748.8 449.3L745.8 449.3Q740.0 449.3 740.0 443.5Z" fill="url(#ut)"/>
<path d="M754.6 439.6L754.6 405.9C754.6 397.8 758.4 394.3 761.4 394.3C764.4 394.3 768.2 397.8 768.2 405.9L768.2 439.6Q768.2 445.0 762.8 445.0L760.0 445.0Q754.6 445.0 754.6 439.6Z" fill="url(#ut)"/>
<path d="M768.0 434.2L768.0 406.5C768.0 400.3 770.9 397.7 773.1 397.7C775.4 397.7 778.3 400.3 778.3 406.5L778.3 434.2Q778.3 438.3 774.2 438.3L772.1 438.3Q768.0 438.3 768.0 434.2Z" fill="url(#ut)"/>
</g><g fill="url(#uts)">
<path d="M456.9 433.0L456.9 409.6C456.9 401.5 460.7 398.0 463.8 398.0C466.8 398.0 470.6 401.5 470.6 409.6L470.6 433.0Q470.6 438.5 465.1 438.5L462.4 438.5Q456.9 438.5 456.9 433.0Z"/>
<path d="M466.7 434.5L466.7 408.2C466.7 398.5 471.3 394.3 474.9 394.3C478.4 394.3 483.0 398.5 483.0 408.2L483.0 434.5Q483.0 441.0 476.5 441.0L473.2 441.0Q466.7 441.0 466.7 434.5Z"/>
<path d="M482.3 436.0L482.3 403.5C482.3 396.2 485.8 393.0 488.5 393.0C491.2 393.0 494.7 396.2 494.7 403.5L494.7 436.0Q494.7 441.0 489.7 441.0L487.3 441.0Q482.3 441.0 482.3 436.0Z"/>
<path d="M494.0 434.8L494.0 403.2C494.0 392.3 499.1 387.7 503.1 387.7C507.1 387.7 512.2 392.3 512.2 403.2L512.2 434.8Q512.2 441.8 505.2 441.8L501.0 441.8Q494.0 441.8 494.0 434.8Z"/>
<path d="M512.2 432.8L512.2 397.9C512.2 380.5 520.4 370.0 526.9 370.0C533.3 370.0 541.5 380.5 541.5 397.9L541.5 432.8Q541.5 439.8 534.5 439.8L519.2 439.8Q512.2 439.8 512.2 432.8Z"/>
<path d="M541.5 433.0L541.5 409.3C541.5 387.8 552.4 378.6 561.0 378.6C569.6 378.6 580.5 387.8 580.5 409.3L580.5 433.0Q580.5 440.0 573.5 440.0L548.5 440.0Q541.5 440.0 541.5 433.0Z"/>
<path d="M628.4 438.7L628.4 414.7C628.4 393.0 642.4 383.7 653.5 383.7C664.5 383.7 678.5 393.0 678.5 414.7L678.5 438.7Q678.5 445.7 671.5 445.7L635.4 445.7Q628.4 445.7 628.4 438.7Z"/>
<path d="M678.5 438.0L678.5 416.2C678.5 396.1 688.9 387.5 697.1 387.5C705.3 387.5 715.7 396.1 715.7 416.2L715.7 438.0Q715.7 445.0 708.7 445.0L685.5 445.0Q678.5 445.0 678.5 438.0Z"/>
<path d="M714.9 444.0L714.9 408.2C714.9 393.2 722.0 383.7 727.5 383.7C733.1 383.7 740.2 393.2 740.2 408.2L740.2 444.0Q740.2 451.0 733.2 451.0L721.9 451.0Q714.9 451.0 714.9 444.0Z"/>
<path d="M740.0 443.5L740.0 408.4C740.0 399.7 744.1 396.0 747.3 396.0C750.5 396.0 754.6 399.7 754.6 408.4L754.6 443.5Q754.6 449.3 748.8 449.3L745.8 449.3Q740.0 449.3 740.0 443.5Z"/>
<path d="M754.6 439.6L754.6 405.9C754.6 397.8 758.4 394.3 761.4 394.3C764.4 394.3 768.2 397.8 768.2 405.9L768.2 439.6Q768.2 445.0 762.8 445.0L760.0 445.0Q754.6 445.0 754.6 439.6Z"/>
<path d="M768.0 434.2L768.0 406.5C768.0 400.3 770.9 397.7 773.1 397.7C775.4 397.7 778.3 400.3 778.3 406.5L778.3 434.2Q778.3 438.3 774.2 438.3L772.1 438.3Q768.0 438.3 768.0 434.2Z"/>
</g>
</svg></div>

  <!-- side strip -->
  <svg class="a" style="left:811px;top:84px" width="32" height="452" viewBox="0 0 32 452">
    <!-- viewer -->
    <rect x="12" y="8.5" width="9" height="8" fill="#e6e6e6"/>
    <path d="M12 10.8h9M12 13.6h9" stroke="#444" stroke-width=".5"/>
    <!-- layout -->
    <rect x="12" y="42" width="4" height="4.5" fill="#e6e6e6"/>
    <rect x="17" y="44" width="4" height="2.5" fill="#e6e6e6"/>
    <rect x="12" y="47.2" width="4" height="3.8" fill="#e6e6e6"/>
    <rect x="17" y="47.2" width="4" height="3.8" fill="#e6e6e6"/>
    <path d="M18 42.6h2" stroke="#e6e6e6" stroke-width=".8"/>
    <!-- visibility eye green -->
    <path d="M12 81c2.5-3.3 7.5-3.3 10 0-2.5 3.3-7.5 3.3-10 0z" fill="#5cc04a"/>
    <circle cx="17" cy="81" r="1.5" fill="#2d5e22"/>
    <!-- findings -->
    <path d="M11 113.5h3.5M11 115.5h4.5M11 117.5h5" stroke="#d8d8d8" stroke-width=".8"/>
    <circle cx="19" cy="113.5" r="2.8" fill="none" stroke="#e0e0e0" stroke-width="1.1"/>
    <path d="M21 115.5l2.5 2.5" stroke="#e0e0e0" stroke-width="1.3"/>
    <!-- cameras -->
    <path d="M15.5 146h3v4l-1 1h-1l-1-1z" fill="#e6e6e6"/>
    <path d="M17 151v3" stroke="#e6e6e6" stroke-width=".8"/>
    <!-- chevron -->
    <path d="M15 436l2.6 2.7-2.6 2.7" fill="none" stroke="#d8d8d8" stroke-width="1.2"/>
  </svg>
  <div class="t sl" style="left:811px;top:105.6px">Viewer</div>
  <div class="t sl" style="left:811px;top:139.9px">Layout</div>
  <div class="t sl" style="left:811px;top:173.9px;color:#67c253">Visibility</div>
  <div class="t sl" style="left:811px;top:208.4px">Findings</div>
  <div class="t sl" style="left:811px;top:243.2px">Cameras</div>

  <!-- panel -->
  <div class="t" style="left:855px;top:93.1px;font-size:7px;color:#c8c8c8">VISIBILITY</div>
  <svg class="a" style="left:843px;top:84px" width="181" height="150" viewBox="0 0 181 150">
    <circle cx="163.5" cy="12" r=".9" fill="#d0d0d0"/><circle cx="166.5" cy="12" r=".9" fill="#d0d0d0"/><circle cx="169.5" cy="12" r=".9" fill="#d0d0d0"/>
    <!-- row1 eye -->
    <path d="M12.5 44c2.5-3 7.5-3 10 0-2.5 3-7.5 3-10 0z" fill="#cfcfcf"/><circle cx="17.5" cy="44" r="1.5" fill="#555"/>
    <path d="M164 45.5l2.5-2.5 2.5 2.5" fill="none" stroke="#bdbdbd" stroke-width=".9"/>
    <!-- row2 -->
    <path d="M12.5 62.9c2.5-3.2 7.5-3.2 10 0-2.5 3.2-7.5 3.2-10 0z" fill="#5cc04a"/><circle cx="17.5" cy="62.9" r="1.5" fill="#2d5e22"/>
    <path d="M32.5 66.5v-3c0-2.5 1.3-3.5 2.5-3.5s2.5 1 2.5 3.5v3" fill="none" stroke="#7a7a6a" stroke-width="1"/>
    <circle cx="163.5" cy="62" r=".9" fill="#d0d0d0"/><circle cx="166.5" cy="62" r=".9" fill="#d0d0d0"/><circle cx="169.5" cy="62" r=".9" fill="#d0d0d0"/>
    <!-- row3 -->
    <path d="M12.5 80.7c2.5-3 7.5-3 10 0-2.5 3-7.5 3-10 0z" fill="#cfcfcf"/><circle cx="17.5" cy="80.7" r="1.5" fill="#555"/>
    <path d="M32.5 77v3c0 2.5 1.3 3.5 2.5 3.5s2.5-1 2.5-3.5v-3" fill="none" stroke="#9a9a9a" stroke-width="1"/>
    <!-- row4 dim -->
    <path d="M12.5 97c2.5-3 7.5-3 10 0-2.5 3-7.5 3-10 0z" fill="#2e2e2e"/>
  </svg>
  <div class="t" style="left:873.8px;top:123.9px;font-size:8.5px;color:#dedede">IO scan 8/23/2024 (3)</div>
  <div class="t" style="left:891px;top:142.5px;font-size:7.2px;color:#5fb84c">Upper Jaw (Altered)</div>
  <div class="t" style="left:873.5px;top:177.5px;font-size:7.2px;color:#cfcfcf">Bite</div>
  <!-- popup -->
  <div class="a" style="left:887px;top:148px;width:126px;height:61px;background:#262626;border:1px solid #575757"></div>
  <div class="t" style="left:895.7px;top:154.8px;font-size:7.7px;color:#c8c8c8">Opacity</div>
  <div class="a" style="left:934px;top:156.7px;width:64px;height:2px;background:#62b94e"></div>
  <div class="a" style="left:995.5px;top:155px;width:5px;height:5px;border-radius:50%;background:#f0f0f0"></div>
  <div class="t" style="left:896px;top:170.8px;font-size:7.2px;color:#bdbdbd">IO scans</div>
  <div class="a" style="left:896px;top:183.3px;width:6.5px;height:6.5px;border-radius:50%;border:1px solid #d8d8d8"></div>
  <div class="a" style="left:898px;top:185.3px;width:2.5px;height:2.5px;border-radius:50%;background:#e8e8e8"></div>
  <div class="t" style="left:908px;top:183.5px;font-size:6.2px;color:#e4e4e4">Altered scan model</div>
  <div class="a" style="left:896px;top:195.8px;width:6.5px;height:6.5px;border-radius:50%;border:1px solid #d0d0d0"></div>
  <div class="t" style="left:908px;top:196px;font-size:6.2px;color:#d8d8d8">Original scan model</div>

  <!-- warnings -->
  <svg class="a" style="left:0;top:505px" width="811" height="31" viewBox="0 0 811 31">
    <g id="w">
      <circle cx="8.75" cy="9.5" r="4.7" fill="none" stroke="#b98270" stroke-width="1"/>
      <path d="M8.75 7v3" stroke="#c98a72" stroke-width="1.3"/><circle cx="8.75" cy="11.8" r=".7" fill="#c98a72"/>
      <g fill="#262626" stroke="#707070" stroke-width="1.2">
        <path d="M4 20.5c3 1 9 1 12.5 0-1 2-1 5.5 0 7.5-3.5-1-9.5-1-12.5 0 1-2 1-5.5 0-7.5z"/>
        <path d="M20 20.5c3.5 1 9.5 1 13 0-1 2-1 5.5 0 7.5-3.5-1-9.5-1-13 0 1-2 1-5.5 0-7.5z"/>
        <path d="M36.3 20.5c3.5 1 9 1 12.5 0-1 2-1 5.5 0 7.5-3.5-1-9-1-12.5 0 1-2 1-5.5 0-7.5z"/>
        <path d="M52 20.5c3.5 1 9.5 1 13 0-1 2-1 5.5 0 7.5-3.5-1-9.5-1-13 0 1-2 1-5.5 0-7.5z"/>
        <path d="M68.5 20.5h11.5l-1 6.5c-1.5 1.8-8 1.8-9.5 0z"/>
        <path d="M84 28.5l1.5-6c1-2.5 10-2.5 11 0l1.5 6z"/>
      </g>
      <g stroke="#8a8a8a" stroke-width=".8" fill="none">
        <path d="M6.5 24.5h7.5M22.5 23.5h8M22.5 25.5h8M38.5 24.5h8M54.5 24.5h8"/>
      </g>
    </g>
    <use href="#w" x="407"/>
  </svg>
  <div class="t warn" style="left:16.3px;top:512.2px">IO scan has been altered</div>
  <div class="t warn" style="left:423.5px;top:512.2px">IO scan has been altered</div>
</div>
</body></html>
